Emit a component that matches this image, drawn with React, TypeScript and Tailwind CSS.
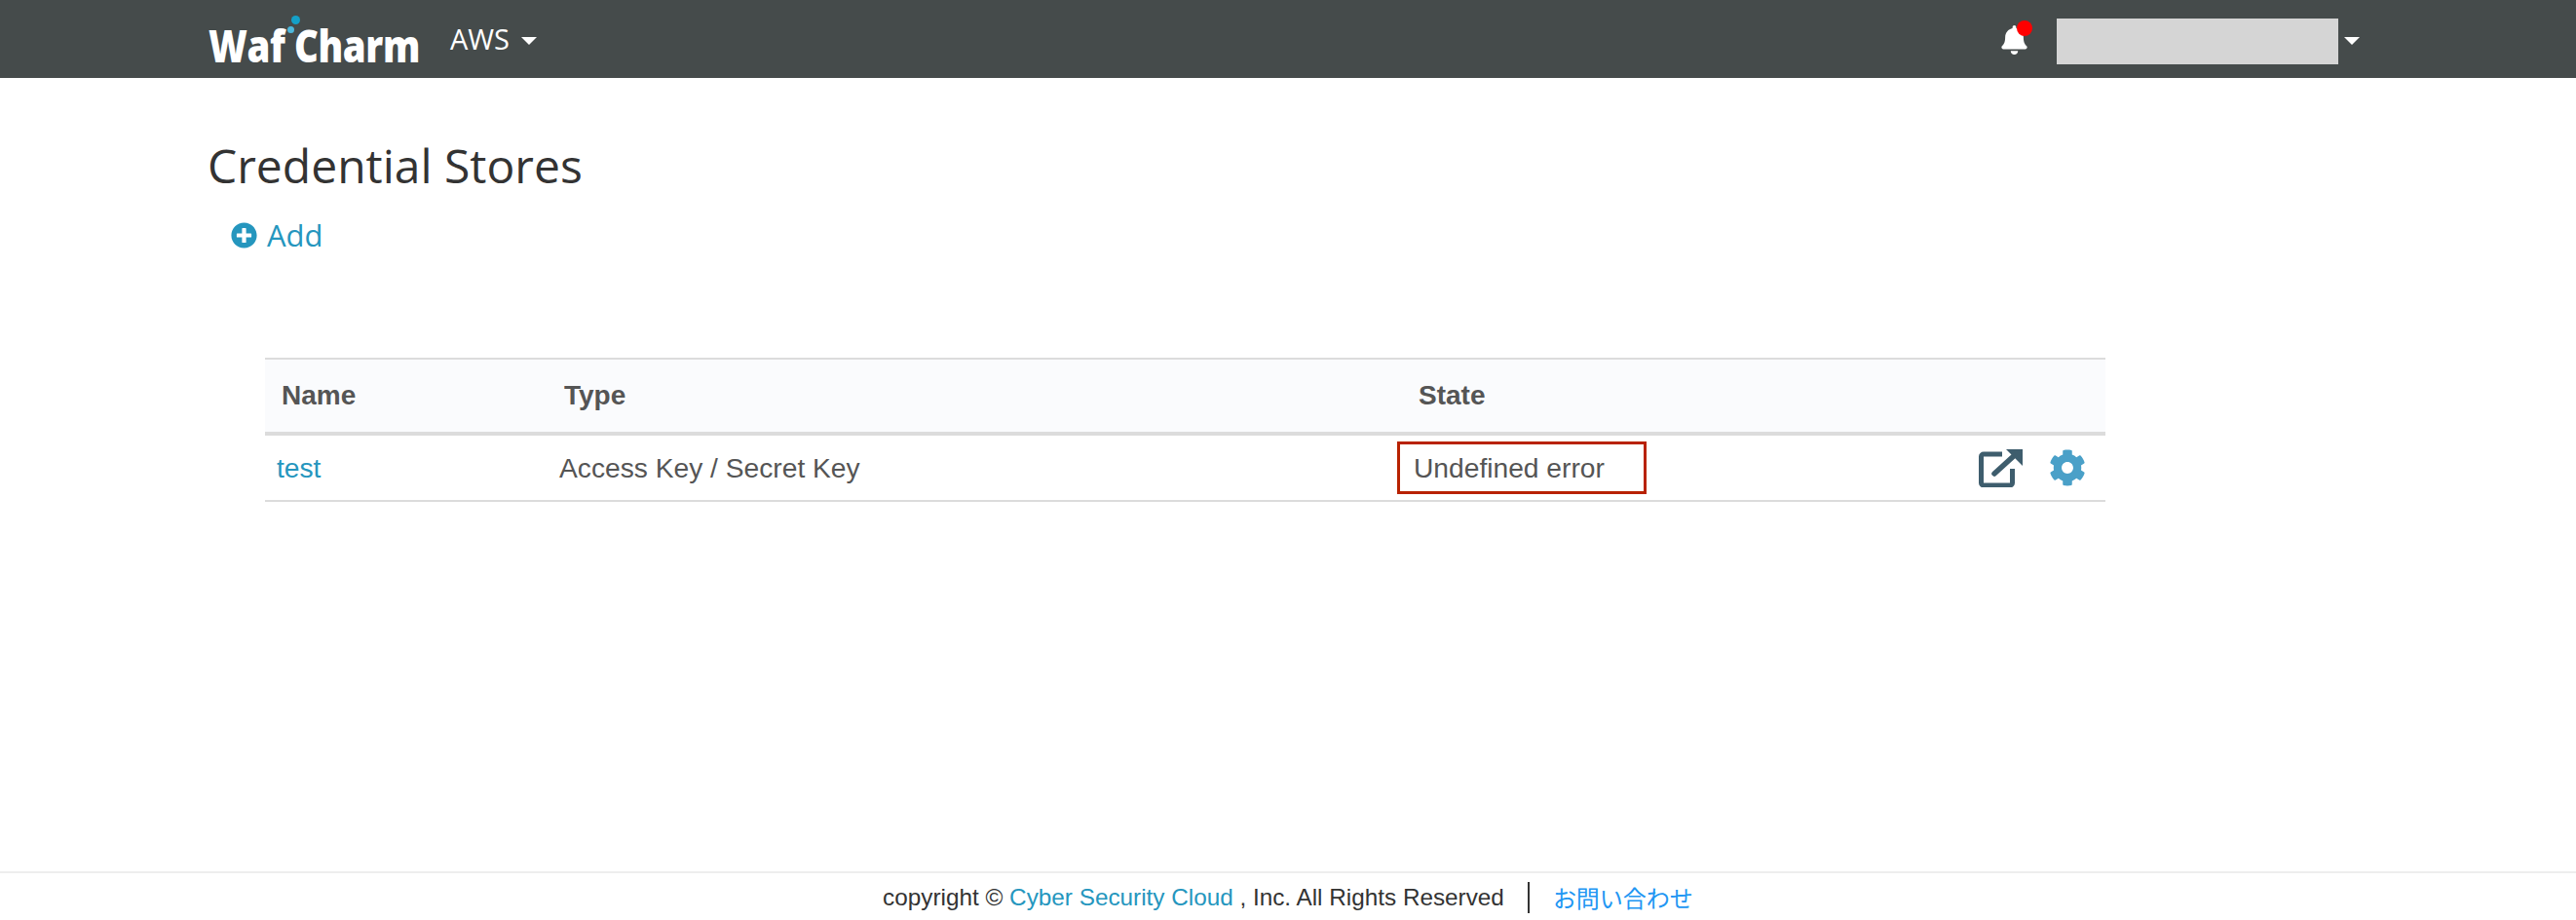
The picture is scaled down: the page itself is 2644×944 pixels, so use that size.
import React from "react";
import { FaBell, FaCog, FaPlusCircle } from "react-icons/fa";

const Caret: React.FC<{ className?: string }> = ({ className }) => (
  <svg viewBox="0 0 16 8" className={`h-[8px] w-[16px] fill-white ${className ?? ""}`}>
    <path d="M0 0h16L8 8z" />
  </svg>
);

const Logo: React.FC = () => (
  <div className="relative flex h-[80px] w-[216px] items-center">
    <span className="inline-block origin-left scale-x-[0.835] whitespace-nowrap pt-[12px] font-['Open_Sans',sans-serif] text-[46px] font-extrabold leading-none tracking-[-0.5px] text-white">
      Waf&nbsp;Charm
    </span>
    <span className="absolute left-[85px] top-[16px] h-[9px] w-[9px] rounded-full bg-[#14a0c8]" />
    <span className="absolute left-[81px] top-[27px] h-[7px] w-[7px] rounded-full bg-[#4db8dc]" />
  </div>
);

const ExternalIcon: React.FC = () => (
  <svg viewBox="0 0 46 40" className="h-[40px] w-[46px]" fill="none" stroke="#3e5d6d">
    <path d="M24 6H5a2.5 2.5 0 0 0-2.5 2.5v27A2.500 2.500 0 0 0 5 38h27a2.500 2.500 0 0 0 2.500-2.500V21" strokeWidth="5" />
    <path d="M16 26L38 6" strokeWidth="5.500" strokeLinecap="round" />
    <path d="M28 1h17v17z" fill="#3e5d6d" stroke="none" />
  </svg>
);

const App: React.FC = () => {
  return (
    <div className="flex min-h-screen flex-col bg-white font-['Liberation_Sans',sans-serif] text-[#555]">
      <header className="flex h-[80px] items-center bg-[#454b4b] pl-[214px] pr-[222px]">
        <Logo />
        <button className="ml-[32px] flex items-center gap-[12px] font-['Open_Sans',sans-serif] text-[29px] text-white">
          AWS
          <Caret className="mt-[4px]" />
        </button>
        <div className="ml-auto flex items-center">
          <div className="relative mr-[30px] mt-[2px]">
            <FaBell className="h-[30px] w-[27px] text-white" />
            <span className="absolute -right-[5px] -top-[5px] h-[16px] w-[16px] rounded-full bg-[#ff0000]" />
          </div>
          <div className="mt-[4px] h-[47px] w-[289px] bg-[#d5d5d5]" />
          <Caret className="ml-[6px] mt-[4px]" />
        </div>
      </header>

      <main className="flex-1 px-[213px]">
        <h1 className="mt-[58px] font-['Open_Sans',sans-serif] text-[48px] leading-[64px] text-[#333]">
          Credential Stores
        </h1>
        <a className="ml-[24px] mt-[18px] flex items-center gap-[10px] font-['Open_Sans',sans-serif] text-[31px] leading-[42px] text-[#2596be]">
          <FaPlusCircle className="h-[27px] w-[27px]" />
          Add
        </a>

        <div className="ml-[59px] mr-[270px] mt-[105px]">
          <div className="flex h-[80px] items-center border-b-[4px] border-t-[2px] border-b-[#dcdcdc] border-t-[#dcdcdc] bg-[#fafbfd] text-[28px] font-bold">
            <div className="w-[290px] pl-[17px]">Name</div>
            <div className="w-[877px] pl-[17px]">Type</div>
            <div className="pl-[17px]">State</div>
          </div>
          <div className="flex h-[68px] items-center border-b-[2px] border-b-[#dcdcdc] text-[28.2px]">
            <a className="w-[290px] pl-[12px] text-[#2596be]">test</a>
            <div className="w-[872px] pl-[12px]">Access Key / Secret Key</div>
            <div className="flex h-[54px] w-[256px] items-center border-[3px] border-[#b82200] pl-[14px]">
              Undefined error
            </div>
            <div className="ml-auto flex items-center gap-[26px] pr-[20px]">
              <ExternalIcon />
              <FaCog className="h-[38px] w-[38px] text-[#4aa0c8]" />
            </div>
          </div>
        </div>
      </main>

      <footer className="flex h-[50px] items-center justify-center gap-[24px] border-t-[2px] border-[#eeeeee] pt-[2px] text-[24.3px] text-[#333]">
        <div>
          copyright © <a className="text-[#2596be]">Cyber Security Cloud</a> , Inc. All Rights Reserved
        </div>
        <div className="h-[32px] w-[2px] bg-[#333]" />
        <a className="font-['Noto_Sans_CJK_JP',sans-serif] text-[24px] text-[#2196f3]">お問い合わせ</a>
      </footer>
    </div>
  );
};

export default App;
